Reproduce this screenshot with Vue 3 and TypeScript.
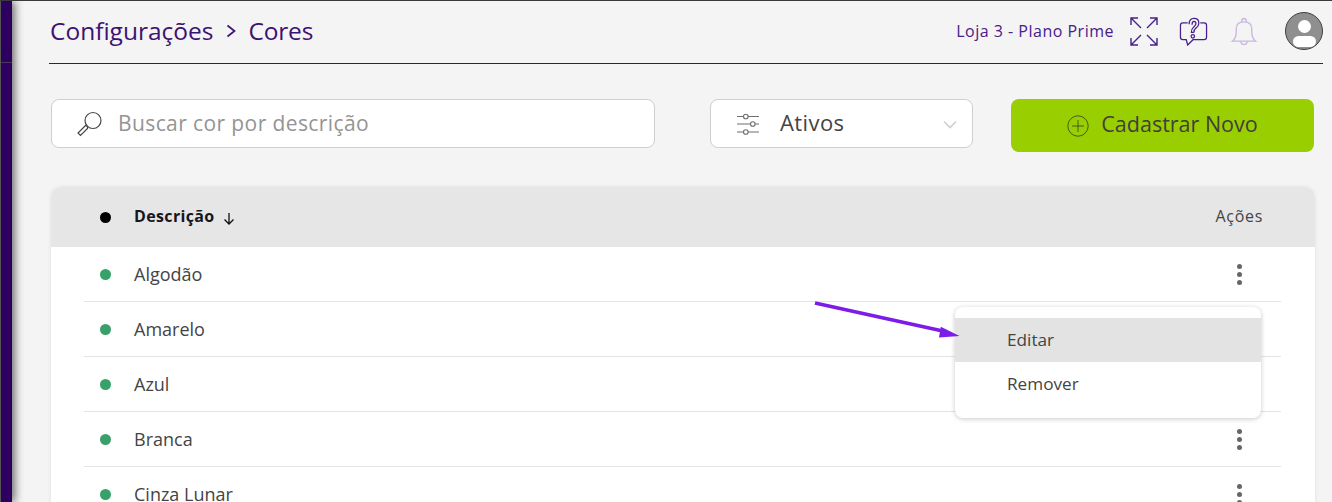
<script setup lang="ts">
const rows: string[] = ['Algodão', 'Amarelo', 'Azul', 'Branca', 'Cinza Lunar']
</script>

<template>
  <div class="page">
    <aside class="rail"><div class="rail-line"></div></aside>
    <main class="main">
      <header class="top">
        <div class="crumbs">
          <span class="crumb-a">Configurações</span>
          <svg class="crumb-sep" width="10" height="16" viewBox="0 0 10 16"><path d="M1.500 2.500 8.500 8 1.500 13.500" fill="none" stroke="#3c1272" stroke-width="1.700"/></svg>
          <span class="crumb-b">Cores</span>
        </div>
        <div class="top-right">
          <span class="store">Loja 3 - Plano Prime</span>
          <svg class="ic-expand" width="28" height="29" viewBox="0 0 28 29" fill="none" stroke="#47208a" stroke-width="1.400">
            <path d="M1 8V1h7M1 1l10 10M20 1h7v7M27 1 17 11M1 21v7h7M1 28l10-10M27 21v7h-7M27 28 17 18"/>
          </svg>
          <svg class="ic-help" width="29" height="29" viewBox="0 0 30 30" fill="none" stroke="#47208a" stroke-width="1.300">
            <path d="M9 6H4Q1.500 6 1.500 8.500V21Q1.500 23.500 4 23.500H7.500L9 29 14.500 23.500H26Q28.500 23.500 28.500 21V8.500Q28.500 6 26 6H22"/>
            <path d="M10.500 7.500Q10.500 1.500 15.500 1.500 20.500 1.500 20.500 6.500 20.500 9.500 17.500 11.500 15.500 13 15.500 16M13.500 8Q13.500 4.500 15.500 4.500 17.500 4.500 17.500 7 17.500 8.500 15 10.500 12.800 12.500 12.800 16H15.500"/>
            <circle cx="14.300" cy="20" r="1.800"/>
          </svg>
          <svg class="ic-bell" width="28" height="29" viewBox="0 0 28 30" fill="none" stroke="#c9b8e0" stroke-width="1.400">
            <path d="M2 25Q6 22 6 15V12Q6 5 14 5 22 5 22 12V15Q22 22 26 25Z"/>
            <path d="M11.500 5Q11.500 1.500 14 1.500 16.500 1.500 16.500 5M10.500 25Q11 28.500 14 28.500 17 28.500 17.500 25"/>
          </svg>
          <div class="avatar"><span class="av-head"></span><span class="av-body"></span></div>
        </div>
      </header>

      <section class="tools">
        <label class="search">
          <svg width="28" height="28" viewBox="0 0 28 28" fill="none" stroke="#444" stroke-width="1.200">
            <circle cx="17" cy="10.500" r="8"/>
            <path d="M11.500 16.500 9.500 15.500 2 23l2.500 2.500L11.500 18.500Z"/>
          </svg>
          <span class="placeholder">Buscar cor por descrição</span>
        </label>
        <div class="filter">
          <svg width="24" height="24" viewBox="0 0 24 24" fill="none" stroke="#6f6f6f" stroke-width="1.100">
            <path d="M1 4.500H7.500M12 4.500H23M1 12H14.500M19 12H23M1 20H7.500M12 20H23"/>
            <circle cx="9.800" cy="4.500" r="2.300"/><circle cx="16.800" cy="12" r="2.300"/><circle cx="9.800" cy="20" r="2.300"/>
          </svg>
          <span class="filter-label">Ativos</span>
          <svg class="chev" width="14" height="9" viewBox="0 0 14 9" fill="none" stroke="#cfcfcf" stroke-width="1.600"><path d="M1 1.500 7 7.500 13 1.500"/></svg>
        </div>
        <button class="add" type="button">
          <svg width="22" height="22" viewBox="0 0 22 22" fill="none" stroke="#47591f" stroke-width="1"><circle cx="11" cy="11" r="10.200"/><path d="M11 5V17M5 11H17"/></svg>
          <span>Cadastrar Novo</span>
        </button>
      </section>

      <section class="card">
        <div class="thead">
          <span class="dot dot-black"></span>
          <span class="th-name">Descrição</span>
          <svg class="sort" width="12" height="13" viewBox="0 0 12 13" fill="none" stroke="#111" stroke-width="1.300"><path d="M6 1V12M1.500 7.500 6 12l4.500-4.500"/></svg>
          <span class="th-act">Ações</span>
        </div>
        <div v-for="r in rows" :key="r" class="row">
          <span class="dot dot-green"></span>
          <span class="name">{{ r }}</span>
          <span class="kebab"><i></i><i></i><i></i></span>
        </div>
        <div class="menu">
          <div class="item item-active">Editar</div>
          <div class="item">Remover</div>
        </div>
      </section>
    </main>
    <svg class="arrow" width="150" height="45" viewBox="0 0 150 45">
      <path d="M2 3 132 31.500" stroke="#7d1be8" stroke-width="3.800" fill="none"/>
      <path d="M146.500 36 126 37.500 127.800 26.800Z" fill="#7d1be8"/>
    </svg>
  </div>
</template>

<style>
html, body { margin: 0; padding: 0; background: #f4f4f4; overflow: hidden; }
</style>

<style scoped>
.page {
  position: relative;
  display: flex;
  width: 1332px;
  height: 502px;
  overflow: hidden;
  box-sizing: border-box;
  border-top: 1px solid #3a3a3a;
  background: #f4f4f4;
  font-family: "Open Sans", "Noto Sans", sans-serif;
  color: #444;
}
.rail {
  width: 12px;
  flex: none;
  background: #2d0060;
  border-left: 1px solid #555;
  box-sizing: border-box;
  box-shadow: 3px 0 8px rgba(0, 0, 0, .55);
  position: relative;
  z-index: 2;
}
.rail-line { margin-top: 61px; height: 1px; background: #4a3a5e; }
.main { flex: 1; min-width: 0; padding-left: 37px; padding-right: 9px; }
.top {
  height: 62px;
  border-bottom: 1px solid #3c1272;
  display: flex;
  align-items: center;
  justify-content: space-between;
}
.crumbs { display: flex; align-items: center; margin-left: 1px; color: #3c1272; font-size: 24.500px; margin-top: -4px; }
.crumb-sep { margin: 2px 13px 0 12px; }
.crumb-b { letter-spacing: -.2px; }
.top-right { display: flex; align-items: center; margin-top: -2px; }
.store { font-size: 16px; color: #47208a; margin-right: 16px; letter-spacing: .5px; }
.ic-expand { margin-right: 21px; }
.ic-help { margin-right: 22px; }
.ic-bell { margin-right: 27px; }
.avatar {
  width: 38px; height: 38px;
  border-radius: 50%;
  background: #8f8f8f;
  border: 1px solid #3f3f3f;
  box-sizing: border-box;
  position: relative;
  overflow: hidden;
}
.av-head { position: absolute; left: 12px; top: 7px; width: 13px; height: 13px; border-radius: 50%; background: #fff; }
.av-body { position: absolute; left: 7px; top: 23px; width: 23px; height: 11px; border-radius: 6px; background: #fff; }
.tools { display: flex; align-items: flex-start; margin-top: 35px; padding-left: 2px; }
.search, .filter {
  height: 49px;
  box-sizing: border-box;
  background: #fff;
  border: 1px solid #cfcfcf;
  border-radius: 8px;
  display: flex;
  align-items: center;
}
.search { width: 604px; padding-left: 24px; }
.placeholder { margin-left: 14px; font-size: 21px; color: #949494; letter-spacing: .4px; margin-top: -1px; }
.filter { width: 263px; margin-left: 55px; padding-left: 25px; position: relative; }
.filter-label { margin-left: 20px; font-size: 22px; color: #444; letter-spacing: .4px; margin-top: -4px; }
.chev { position: absolute; right: 15px; top: 20px; }
.add {
  width: 303px; height: 53px;
  margin-left: 38px;
  border: 0;
  border-radius: 8px;
  background: #99cf00;
  color: #40403f;
  display: flex; align-items: center; justify-content: center; gap: 12px;
  font-family: inherit;
  font-size: 21.500px;
  font-weight: 500;
  padding: 0;
}
.add span { margin-top: -5px; }
.card {
  position: relative;
  margin: 35px 8px 0 2px;
  background: #fff;
  border-radius: 10px 10px 0 0;
  box-shadow: 0 0 4px rgba(0, 0, 0, .08);
}
.thead {
  height: 60px;
  background: #e6e6e6;
  border-radius: 10px 10px 0 0;
  display: flex; align-items: center;
  padding: 0 52px 0 49px;
}
.dot { width: 11px; height: 11px; border-radius: 50%; flex: none; }
.dot-black { background: #000; }
.dot-green { background: #38a169; }
.th-name { margin: -2px 0 0 23px; font-size: 16px; font-weight: 700; color: #16161d; letter-spacing: .35px; }
.sort { margin-left: 8px; margin-top: 2px; }
.th-act { margin: -2px 0 0 auto; font-size: 16px; color: #444; letter-spacing: .7px; }
.row {
  height: 55px;
  box-sizing: border-box;
  margin: 0 34px 0 33px;
  padding: 0 39px 0 16px;
  border-bottom: 1px solid #e4e4e4;
  display: flex; align-items: center;
}
.name { margin-left: 23px; font-size: 18px; color: #444; }
.kebab { margin-left: auto; display: flex; flex-direction: column; gap: 3px; }
.kebab i { display: block; width: 5px; height: 5px; border-radius: 50%; background: #666; }
.menu {
  position: absolute;
  left: 904px; top: 120px;
  width: 306px; height: 111px;
  box-sizing: border-box;
  padding-top: 11px;
  background: #fff;
  border-radius: 8px;
  box-shadow: 0 1px 5px rgba(0, 0, 0, .22);
}
.item { height: 44px; line-height: 44px; padding-left: 52px; font-size: 17.200px; color: #444; }
.item-active { background: #e3e3e3; }
.arrow { position: absolute; left: 813px; top: 299px; z-index: 3; }
</style>
